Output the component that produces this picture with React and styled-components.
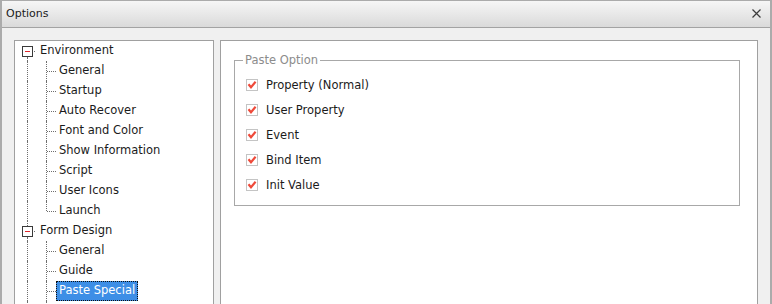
import styled, { createGlobalStyle } from 'styled-components'

//global
const GlobalStyle = createGlobalStyle`
html, body {
  margin: 0;
  padding: 0;
  background: #f0f0f0;
}
body {
  font-family: "DejaVu Sans", Verdana, sans-serif;
  font-size: 11.5px;
  color: #1b1b1b;
}
`;

//window frame
const Window = styled.div`
width: 772px;
height: 304px;
box-sizing: border-box;
border: 2px solid #ababab;
border-top-width: 1px;
border-bottom: none;
background: #f0f0f0;
display: flex;
flex-direction: column;
overflow: hidden;
`;

const TitleBar = styled.div`
height: 25px;
flex: none;
display: flex;
align-items: center;
justify-content: space-between;
padding: 0 8px 1px 4px;
background: linear-gradient(#f6f6f6, #dadada);
border-bottom: 1px solid #a3a3a3;
`;

const Title = styled.span`
font-size: 11px;
color: #1a1a1a;
`;

const CloseButton = styled.button`
border: none;
background: transparent;
padding: 0;
width: 11px;
height: 11px;
display: flex;
cursor: pointer;
`;

const Body = styled.div`
flex: 1;
display: flex;
gap: 6px;
padding: 12px 12px 0 12px;
min-height: 0;
`;

const Panel = styled.div`
background: #ffffff;
border: 1px solid #a0a0a0;
height: 300px;
flex: none;
box-sizing: border-box;
width: ${p => p.$width}px;
`;

//tree
const TreeList = styled.div`
display: flex;
flex-direction: column;
`;

const Row = styled.div`
display: flex;
height: 20px;
align-items: center;
padding-left: ${p => p.$indent}px;
`;

const Expander = styled.span`
position: relative;
align-self: flex-start;
margin-top: 5px;
width: 11px;
height: 11px;
box-sizing: border-box;
border: 1px solid #3a3a3a;
background: #fff;
display: flex;
align-items: center;
justify-content: center;
&::before {
  content: '';
  display: ${p => (p.$first ? 'none' : 'block')};
  position: absolute;
  left: 4px;
  top: -6px;
  height: 5px;
  border-left: 1px dotted #6e6e6e;
}
&::after {
  content: '';
  position: absolute;
  left: 4px;
  top: 10px;
  height: 4px;
  border-left: 1px dotted #6e6e6e;
}
`;

const Minus = styled.span`
width: 5px;
height: 1px;
background: #e0262b;
`;

const Connector = styled.span`
width: 4px;
height: 1px;
display: flex;
&::before {
  content: '';
  width: 1px;
  height: 1px;
  margin-left: 1px;
  background: #6e6e6e;
}
`;

const Rail = styled.span`
width: 19px;
height: 20px;
box-sizing: border-box;
border-left: 1px dotted #6e6e6e;
`;

const Branch = styled.span`
position: relative;
width: 10px;
height: 20px;
&::before {
  content: '';
  position: absolute;
  left: 0;
  top: 0;
  height: ${p => (p.$last ? '10px' : '20px')};
  border-left: 1px dotted #6e6e6e;
}
&::after {
  content: '';
  position: absolute;
  left: 1px;
  right: 0;
  top: 10px;
  border-top: 1px dotted #6e6e6e;
}
`;

const Label = styled.span`
padding: 2px 2px 3px 2px;
line-height: 13px;
border: 1px dotted ${p => (p.$selected ? '#101010' : 'transparent')};
background: ${p => (p.$selected ? '#3d8ee6' : 'transparent')};
color: ${p => (p.$selected ? '#ffffff' : '#1b1b1b')};
white-space: nowrap;
`;

//options
const Group = styled.fieldset`
margin: 12px 17px 0 13px;
padding: 5px 11px 8px 11px;
border: 1px solid #a8a8a8;
`;

const Legend = styled.legend`
padding: 0 2px;
margin-left: -3px;
line-height: 14px;
color: #8c8c8c;
`;

const OptionRow = styled.label`
display: flex;
align-items: center;
gap: 8px;
height: 25px;
`;

const Box = styled.span`
width: 12px;
height: 12px;
box-sizing: border-box;
border: 1px solid #c4c4c4;
background: #fff;
display: flex;
`;

const CheckMark = () => (
    <svg width="10" height="10" viewBox="0 0 10 10">
        <polyline points="1.5,4.2 4,7.2 8.6,1.8" fill="none" stroke="#ee4a3a" strokeWidth="2.2" />
    </svg>
);

const Option = ({text}) => {
    return (
        <OptionRow>
            <Box><CheckMark /></Box>
            <span>{text}</span>
        </OptionRow>
    );
}

const tree = [
    {name: 'Environment', items: ['General', 'Startup', 'Auto Recover', 'Font and Color', 'Show Information', 'Script', 'User Icons', 'Launch']},
    {name: 'Form Design', items: ['General', 'Guide', 'Paste Special'], more: true},
];

const options = ['Property (Normal)', 'User Property', 'Event', 'Bind Item', 'Init Value'];

const App = () => {
    return (
        <Window>
            <GlobalStyle />
            <TitleBar>
                <Title>Options</Title>
                <CloseButton aria-label="Close">
                    <svg width="11" height="11" viewBox="0 0 11 11">
                        <path d="M1.5 1.5 L9.5 9.5 M9.5 1.5 L1.5 9.5" stroke="#3c3c3c" strokeWidth="1.2" />
                    </svg>
                </CloseButton>
            </TitleBar>
            <Body>
                <Panel $width={200}>
                    <TreeList>
                        {tree.map((node, i) => (
                            <div key={node.name}>
                                <Row $indent={7}>
                                    <Expander $first={i === 0}><Minus /></Expander>
                                    <Connector />
                                    <Label>{node.name}</Label>
                                </Row>
                                {node.items.map((item, j) => (
                                    <Row $indent={12} key={item + j}>
                                        <Rail />
                                        <Branch $last={!node.more && j === node.items.length - 1} />
                                        <Label $selected={item === 'Paste Special'}>{item}</Label>
                                    </Row>
                                ))}
                                {node.more && <Row $indent={12}><Rail /><Branch /></Row>}
                            </div>
                        ))}
                    </TreeList>
                </Panel>
                <Panel $width={538}>
                    <Group>
                        <Legend>Paste Option</Legend>
                        {options.map(o => <Option key={o} text={o} />)}
                    </Group>
                </Panel>
            </Body>
        </Window>
    );
};

export default App;
